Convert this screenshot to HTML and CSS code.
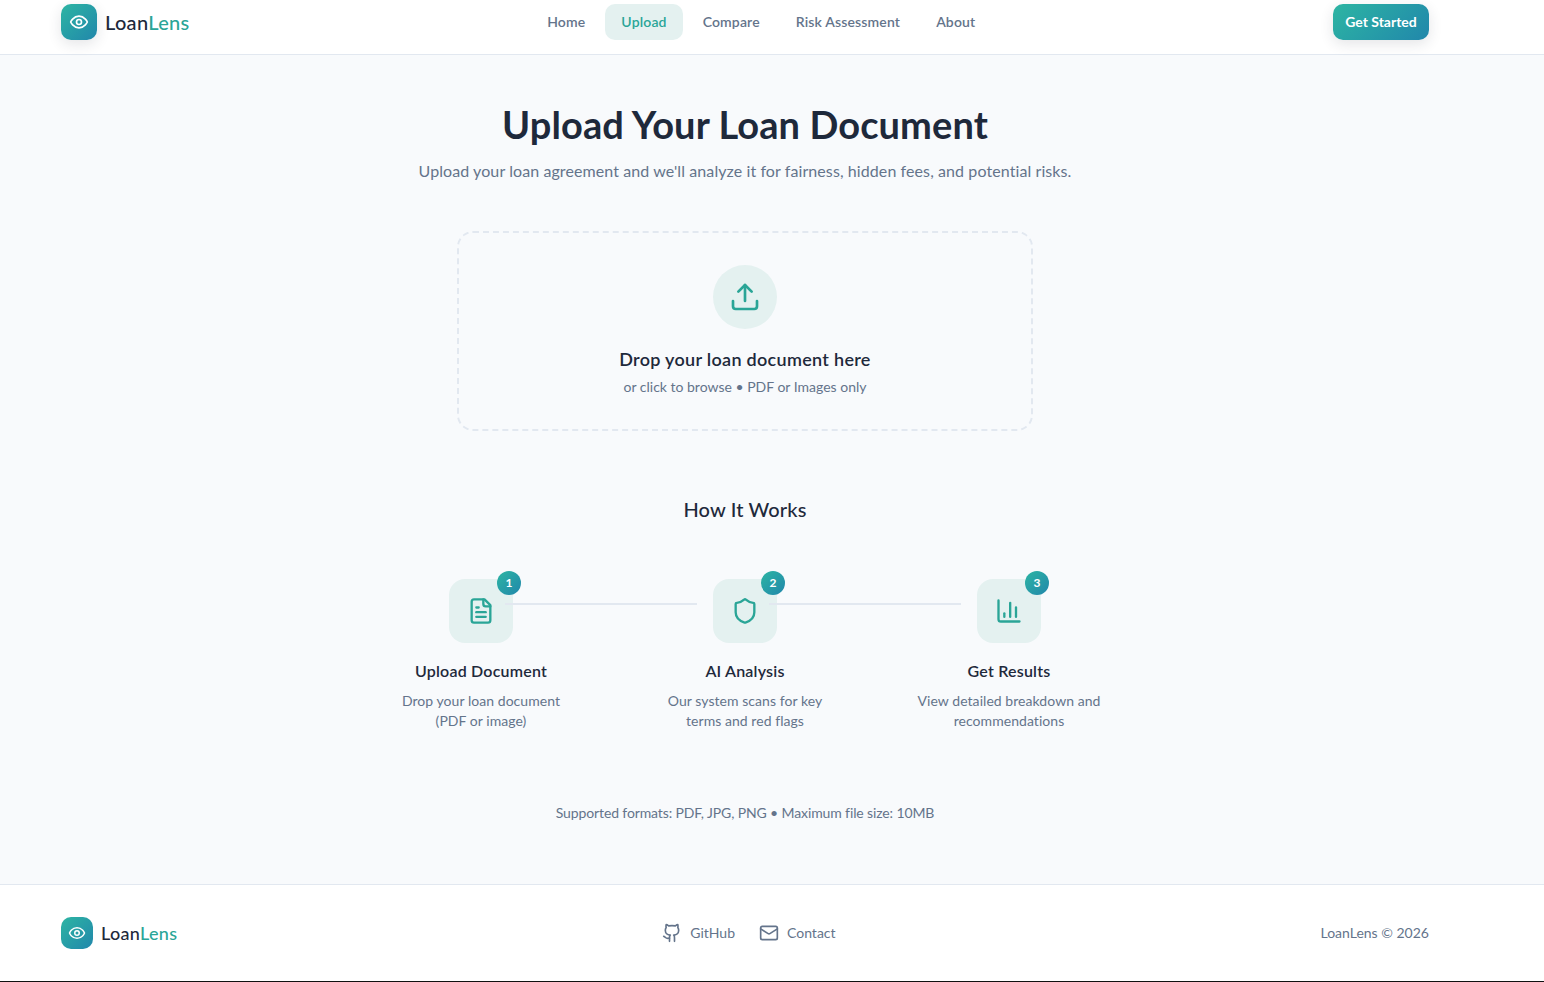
FILE: index.html
```html
<!DOCTYPE html>
<html lang="en">
<head>
    <meta charset="UTF-8">
    <title>LoanLens</title>
    <link rel="stylesheet" href="styles.css">
</head>
<body>
    <header class="site-header">
        <a class="logo">
            <span class="logo-mark">
                <svg class="icon" width="20" height="20" viewBox="0 0 24 24"><path d="M2 12s3-7 10-7 10 7 10 7-3 7-10 7-10-7-10-7Z"/><circle cx="12" cy="12" r="3"/></svg>
            </span>
            <span class="logo-text">Loan<span class="accent">Lens</span></span>
        </a>
        <nav class="main-nav">
            <a class="nav-link">Home</a>
            <a class="nav-link active">Upload</a>
            <a class="nav-link">Compare</a>
            <a class="nav-link">Risk Assessment</a>
            <a class="nav-link">About</a>
        </nav>
        <button class="cta-button">Get Started</button>
    </header>

    <main class="content">
        <h1>Upload Your Loan Document</h1>
        <p class="subtitle">Upload your loan agreement and we'll analyze it for fairness, hidden fees, and potential risks.</p>

        <div class="dropzone">
            <div class="drop-icon">
                <svg class="icon" width="32" height="32" viewBox="0 0 24 24"><path d="M21 15v4a2 2 0 0 1-2 2H5a2 2 0 0 1-2-2v-4"/><polyline points="17 8 12 3 7 8"/><line x1="12" y1="3" x2="12" y2="15"/></svg>
            </div>
            <h3>Drop your loan document here</h3>
            <p>or click to browse • PDF or Images only</p>
        </div>

        <h2>How It Works</h2>

        <div class="steps">
            <div class="step">
                <div class="step-icon">
                    <svg class="icon" width="28" height="28" viewBox="0 0 24 24"><path d="M15 2H6a2 2 0 0 0-2 2v16a2 2 0 0 0 2 2h12a2 2 0 0 0 2-2V7Z"/><path d="M14 2v4a2 2 0 0 0 2 2h4"/><path d="M10 9H8"/><path d="M16 13H8"/><path d="M16 17H8"/></svg>
                    <span class="step-badge">1</span>
                </div>
                <span class="step-line"></span>
                <h4>Upload Document</h4>
                <p>Drop your loan document (PDF or image)</p>
            </div>
            <div class="step">
                <div class="step-icon">
                    <svg class="icon" width="28" height="28" viewBox="0 0 24 24"><path d="M20 13c0 5-3.5 7.5-7.66 8.95a1 1 0 0 1-.67-.01C7.5 20.5 4 18 4 13V6a1 1 0 0 1 1-1c2 0 4.5-1.2 6.24-2.72a1.17 1.17 0 0 1 1.52 0C14.51 3.81 17 5 19 5a1 1 0 0 1 1 1z"/></svg>
                    <span class="step-badge">2</span>
                </div>
                <span class="step-line"></span>
                <h4>AI Analysis</h4>
                <p>Our system scans for key terms and red flags</p>
            </div>
            <div class="step">
                <div class="step-icon">
                    <svg class="icon" width="28" height="28" viewBox="0 0 24 24"><path d="M3 3v16a2 2 0 0 0 2 2h16"/><path d="M18 17V9"/><path d="M13 17V5"/><path d="M8 17v-3"/></svg>
                    <span class="step-badge">3</span>
                </div>
                <h4>Get Results</h4>
                <p>View detailed breakdown and recommendations</p>
            </div>
        </div>

        <p class="formats">Supported formats: PDF, JPG, PNG • Maximum file size: 10MB</p>
    </main>

    <footer class="site-footer">
        <a class="logo small">
            <span class="logo-mark">
                <svg class="icon" width="18" height="18" viewBox="0 0 24 24"><path d="M2 12s3-7 10-7 10 7 10 7-3 7-10 7-10-7-10-7Z"/><circle cx="12" cy="12" r="3"/></svg>
            </span>
            <span class="logo-text">Loan<span class="accent">Lens</span></span>
        </a>
        <div class="footer-links">
            <a class="footer-link">
                <svg class="icon" width="20" height="20" viewBox="0 0 24 24"><path d="M15 22v-4a4.8 4.8 0 0 0-1-3.5c3 0 6-2 6-5.5.08-1.25-.27-2.48-1-3.5.28-1.15.28-2.35 0-3.5 0 0-1 0-3 1.5-2.64-.5-5.36-.5-8 0C6 2 5 2 5 2c-.3 1.15-.3 2.35 0 3.5A5.403 5.403 0 0 0 4 9c0 3.5 3 5.5 6 5.5-.39.49-.68 1.05-.85 1.65-.17.6-.22 1.23-.15 1.85v4"/><path d="M9 18c-4.51 2-5-2-7-2"/></svg>
                GitHub
            </a>
            <a class="footer-link">
                <svg class="icon" width="20" height="20" viewBox="0 0 24 24"><rect x="2" y="4" width="20" height="16" rx="2"/><path d="m22 7-8.97 5.7a1.94 1.94 0 0 1-2.06 0L2 7"/></svg>
                Contact
            </a>
        </div>
        <span class="copyright">LoanLens © 2026</span>
    </footer>
</body>
</html>
```

FILE: styles.css
```css
:root {
    --teal: #2aa597;
    --dark: #1e293b;
    --grey: #64748b;
    --border: #e2e8f0;
    --tint: #e4f1f0;
    --gradient: linear-gradient(135deg, #2db5a3, #2187ab);
}

* {
    box-sizing: border-box;
    margin: 0;
    padding: 0;
}

html {
    background-color: #111;
}

body {
    font-family: 'Lato', sans-serif;
    background-color: #f8fafc;
    color: var(--dark);
    height: 981px;
    overflow: hidden;
}

.icon {
    fill: none;
    stroke: currentColor;
    stroke-width: 2;
    stroke-linecap: round;
    stroke-linejoin: round;
    flex-shrink: 0;
}

.site-header {
    display: flex;
    justify-content: space-between;
    align-items: center;
    height: 55px;
    padding: 4px 115px 14px 61px;
    background-color: white;
    border-bottom: 1px solid var(--border);
}

.logo {
    display: flex;
    align-items: center;
    gap: 8px;
}

.logo-mark {
    display: flex;
    align-items: center;
    justify-content: center;
    width: 36px;
    height: 36px;
    border-radius: 10px;
    background: var(--gradient);
    color: white;
    box-shadow: 0 4px 14px rgba(30, 41, 59, 0.12);
}

.logo-text {
    font-size: 20px;
    font-weight: 500;
    letter-spacing: 0.3px;
}

.accent {
    color: var(--teal);
}

.main-nav {
    display: flex;
    gap: 4px;
}

.nav-link {
    display: block;
    padding: 8px 16px;
    height: 36px;
    border-radius: 10px;
    font-size: 14px;
    line-height: 20px;
    font-weight: 600;
    letter-spacing: 0.15px;
    color: var(--grey);
}

.nav-link.active {
    background-color: var(--tint);
    color: var(--teal);
}

.cta-button {
    width: 96px;
    height: 36px;
    border: none;
    border-radius: 10px;
    background: var(--gradient);
    color: white;
    font-family: inherit;
    font-size: 14px;
    font-weight: 700;
    padding-bottom: 2px;
    box-shadow: 0 4px 14px rgba(30, 41, 59, 0.12);
}

.content {
    display: flex;
    flex-direction: column;
    align-items: center;
    height: 829px;
    padding: 45px 54px 0 0;
}

h1 {
    font-size: 38px;
    line-height: 48px;
    font-weight: 700;
    letter-spacing: 0.1px;
}

.subtitle {
    margin-top: 11px;
    font-size: 16px;
    line-height: 24px;
    letter-spacing: 0.09px;
    color: var(--grey);
}

.dropzone {
    display: flex;
    flex-direction: column;
    align-items: center;
    width: 576px;
    height: 200px;
    margin-top: 48px;
    padding-top: 32px;
    border: 2px dashed var(--border);
    border-radius: 16px;
}

.drop-icon {
    display: flex;
    align-items: center;
    justify-content: center;
    width: 64px;
    height: 64px;
    border-radius: 50%;
    background-color: var(--tint);
    color: var(--teal);
}

.dropzone h3 {
    margin-top: 16px;
    font-size: 18px;
    line-height: 28px;
    font-weight: 600;
    letter-spacing: 0.3px;
}

.dropzone p {
    margin-top: 4px;
    font-size: 14px;
    line-height: 20px;
    color: var(--grey);
}

h2 {
    margin-top: 64px;
    font-size: 20px;
    line-height: 28px;
    font-weight: 500;
    letter-spacing: 0.15px;
}

.steps {
    display: flex;
    gap: 64px;
    margin-top: 56px;
}

.step {
    position: relative;
    display: flex;
    flex-direction: column;
    align-items: center;
    width: 200px;
    text-align: center;
}

.step-icon {
    position: relative;
    display: flex;
    align-items: center;
    justify-content: center;
    width: 64px;
    height: 64px;
    border-radius: 16px;
    background-color: var(--tint);
    color: var(--teal);
}

.step-badge {
    position: absolute;
    top: -8px;
    right: -8px;
    width: 24px;
    height: 24px;
    border-radius: 50%;
    background: var(--gradient);
    color: white;
    font-size: 12px;
    line-height: 24px;
    font-weight: 700;
}

.step-line {
    position: absolute;
    top: 24px;
    left: 124px;
    width: 192px;
    height: 2px;
    background-color: var(--border);
}

.step h4 {
    margin-top: 16px;
    font-size: 16px;
    line-height: 24px;
    font-weight: 600;
    letter-spacing: 0.2px;
}

.step p {
    margin-top: 8px;
    padding: 0 5px;
    font-size: 14px;
    line-height: 20px;
    letter-spacing: 0.05px;
    color: var(--grey);
}

.formats {
    margin-top: 72px;
    font-size: 14px;
    line-height: 20px;
    letter-spacing: -0.12px;
    color: var(--grey);
}

.site-footer {
    display: flex;
    justify-content: space-between;
    align-items: center;
    height: 97px;
    padding: 0 115px 0 61px;
    background-color: white;
    border-top: 1px solid var(--border);
}

.logo.small .logo-mark {
    width: 32px;
    height: 32px;
    box-shadow: none;
}

.logo.small .logo-text {
    font-size: 18px;
    margin-bottom: 1px;
}

.footer-links {
    display: flex;
    gap: 24px;
    margin-bottom: 1px;
}

.footer-link {
    display: flex;
    align-items: center;
    gap: 8px;
    font-size: 14px;
    color: var(--grey);
}

.copyright {
    font-size: 14px;
    margin-bottom: 2px;
    color: var(--grey);
}
```
